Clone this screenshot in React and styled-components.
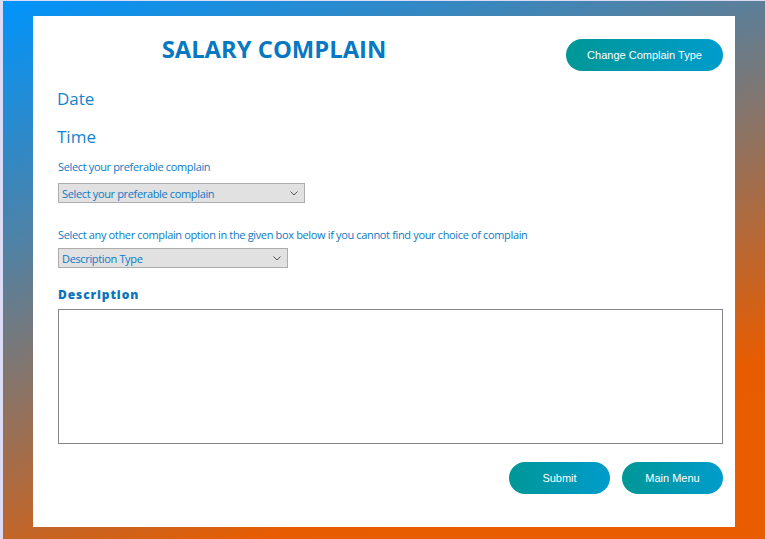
import React from "react";
import styled, { createGlobalStyle } from "styled-components";

const Global = createGlobalStyle`
  html, body { margin: 0; padding: 0; overflow: hidden; }
  body { font-family: "Open Sans", "Noto Sans", sans-serif; }
`;

const Page = styled.div`
  box-sizing: border-box;
  width: 765px;
  height: 539px;
  border-left: 3px solid #dcdcf6;
  border-top: 1px solid #dcdcf6;
  padding: 15px 30px 12px 30px;
  background: linear-gradient(160deg, #0094fb 0%, #4f82a6 30%, #e85c00 78%, #ea5c00 100%);
  display: flex;
`;

const Card = styled.div`
  flex: 1;
  background: #ffffff;
  padding: 17px 12px 0 25px;
  display: flex;
  flex-direction: column;
`;

const Header = styled.div`
  display: flex;
  justify-content: space-between;
  align-items: flex-start;
`;

const Title = styled.h1`
  margin: 0;
  width: 432px;
  text-align: center;
  font-family: "Open Sans", sans-serif;
  font-weight: 700;
  font-size: 23.8px;
  line-height: 32px;
  color: #0878c2;
`;

const PillButton = styled.button`
  box-sizing: border-box;
  width: ${(p) => p.$w}px;
  height: 32px;
  margin-top: ${(p) => p.$mt || 0}px;
  border: none;
  border-radius: 16px;
  background: linear-gradient(90deg, #009797 0%, #009ccc 100%);
  color: #ffffff;
  font-family: "Liberation Sans", Arial, sans-serif;
  font-size: 11px;
  padding: 0;
  cursor: pointer;
`;

const BigLabel = styled.div`
  margin-top: ${(p) => p.$mt}px;
  margin-left: -1px;
  font-family: "Open Sans", sans-serif;
  font-size: 17px;
  line-height: 22px;
  color: #1384d2;
`;

const SmallLabel = styled.div`
  margin-top: ${(p) => p.$mt}px;
  font-family: "Open Sans", sans-serif;
  font-size: 11px;
  letter-spacing: -0.35px;
  line-height: 14px;
  color: #0c7ac6;
`;

const Select = styled.div`
  box-sizing: border-box;
  margin-top: ${(p) => p.$mt}px;
  width: ${(p) => p.$w}px;
  height: ${(p) => p.$h}px;
  background: #e1e1e1;
  border: 1px solid #adadad;
  display: flex;
  align-items: center;
  justify-content: space-between;
  padding: 0 6px 0 3px;
  font-family: "Open Sans", sans-serif;
  font-size: 11px;
  letter-spacing: -0.35px;
  color: #0c7ac6;
`;

const SectionTitle = styled.div`
  margin-top: 19px;
  font-family: "Open Sans", sans-serif;
  font-weight: 800;
  font-size: 12px;
  letter-spacing: 0.9px;
  line-height: 16px;
  color: #0a74bc;
`;

const TextArea = styled.div`
  box-sizing: border-box;
  margin-top: 6px;
  height: 135px;
  border: 1px solid #85858f;
  background: #fff;
`;

const Footer = styled.div`
  margin-top: 18px;
  display: flex;
  justify-content: flex-end;
  gap: 12px;
`;

const Chevron = () => (
  <svg width="8" height="5" viewBox="0 0 8 5">
    <path d="M0.5 0.5 L4 4 L7.5 0.5" fill="none" stroke="#555" strokeWidth="1" />
  </svg>
);

export default function App() {
  return (
    <>
      <Global />
      <Page>
        <Card>
          <Header>
            <Title>SALARY COMPLAIN</Title>
            <PillButton $w={157} $mt={6}>Change Complain Type</PillButton>
          </Header>
          <BigLabel $mt={17}>Date</BigLabel>
          <BigLabel $mt={16}>Time</BigLabel>
          <SmallLabel $mt={12}>Select your preferable complain</SmallLabel>
          <Select $mt={9} $w={247} $h={20}>
            <span>Select your preferable complain</span>
            <Chevron />
          </Select>
          <SmallLabel $mt={25}>
            Select any other complain option in the given box below if you cannot find your choice of complain
          </SmallLabel>
          <Select $mt={6} $w={230} $h={20}>
            <span>Description Type</span>
            <Chevron />
          </Select>
          <SectionTitle>Description</SectionTitle>
          <TextArea />
          <Footer>
            <PillButton $w={101}>Submit</PillButton>
            <PillButton $w={101}>Main Menu</PillButton>
          </Footer>
        </Card>
      </Page>
    </>
  );
}
